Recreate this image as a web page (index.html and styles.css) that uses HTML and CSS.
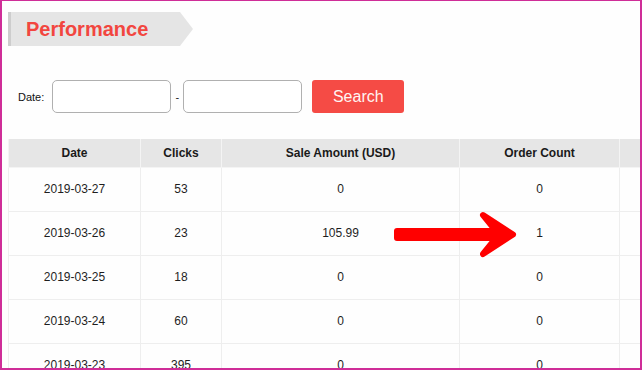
FILE: index.html
```html
<!DOCTYPE html>
<html>

<head>
	<meta charset="UTF-8">
	<meta name="viewport" content="width=device-width, initial-scale=1.0">
	<title>Performance</title>
	<link rel="stylesheet" href="styles.css">
</head>

<body>
	<div class="frame">
		<div class="panel">
			<div class="title-tab">Performance</div>

			<div class="filter">
				<label class="filter-label">Date:</label>
				<input type="text" class="date-input">
				<span class="dash">-</span>
				<input type="text" class="date-input">
				<button class="btn-search">Search</button>
			</div>

			<table class="report">
				<colgroup>
					<col class="c-date">
					<col class="c-clicks">
					<col class="c-amount">
					<col class="c-orders">
					<col class="c-extra">
				</colgroup>
				<thead>
					<tr>
						<th>Date</th>
						<th>Clicks</th>
						<th>Sale Amount (USD)</th>
						<th>Order Count</th>
						<th></th>
					</tr>
				</thead>
				<tbody>
					<tr><td>2019-03-27</td><td>53</td><td>0</td><td>0</td><td></td></tr>
					<tr><td>2019-03-26</td><td>23</td><td>105.99</td><td>1</td><td></td></tr>
					<tr><td>2019-03-25</td><td>18</td><td>0</td><td>0</td><td></td></tr>
					<tr><td>2019-03-24</td><td>60</td><td>0</td><td>0</td><td></td></tr>
					<tr><td>2019-03-23</td><td>395</td><td>0</td><td>0</td><td></td></tr>
				</tbody>
			</table>
		</div>

		<!-- callout pointing at the order -->
		<svg class="callout" width="130" height="56" viewBox="0 0 130 56">
			<path d="M5 24 H104 L91 8 L121 27.5 L91 47 L104 31 H5 Z" fill="#ff0000" stroke="#ff0000" stroke-width="6" stroke-linejoin="round" />
		</svg>
	</div>
</body>

</html>
```

FILE: styles.css
```css
* {
	margin: 0px;
	padding: 0px;
	box-sizing: border-box;
}

body {
	background-color: #ffffff;
	font-family: "Liberation Sans", Arial, sans-serif;
	color: #222222;
}

.frame {
	position: relative;
	width: 642px;
	height: 370px;
	overflow: hidden;
	border-top: 1px solid #cf2d98;
	border-left: 2px solid #cf2d98;
	border-right: 2px solid #cf2d98;
	border-bottom: 2px solid #cf2d98;
	background-color: #fefefe;
}

.panel {
	padding-left: 6px;
	padding-top: 11px;
}

.title-tab {
	width: 185px;
	height: 34px;
	line-height: 34px;
	padding-left: 15px;
	border-left: 3px solid #cdcdcd;
	background-color: #e5e5e5;
	clip-path: polygon(0 0, 172px 0, 100% 50%, 172px 100%, 0 100%);
	color: #f2463f;
	font-size: 20px;
	font-weight: bold;
}

.filter {
	display: flex;
	align-items: center;
	margin-top: 34px;
	padding-left: 10px;
	height: 33px;
}

.filter-label {
	font-size: 11px;
	color: #111111;
	margin-right: 8px;
}

.date-input {
	width: 119px;
	height: 33px;
	border: 1px solid #b0b0b0;
	border-radius: 5px;
	background-color: #ffffff;
}

.dash {
	width: 12px;
	text-align: center;
	font-size: 11px;
}

.btn-search {
	width: 92px;
	height: 33px;
	margin-left: 10px;
	border: none;
	border-radius: 3px;
	background-color: #f54b45;
	color: #fff4f2;
	font-family: "Liberation Sans", Arial, sans-serif;
	font-size: 16px;
	cursor: pointer;
}

.report {
	margin-top: 26px;
	width: 772px;
	table-layout: fixed;
	border-collapse: collapse;
	font-size: 12px;
}

.c-date { width: 132px; }
.c-clicks { width: 81px; }
.c-amount { width: 238px; }
.c-orders { width: 160px; }
.c-extra { width: 161px; }

.report th {
	height: 28px;
	background-color: #e6e6e6;
	border: 1px solid #f4f4f4;
	border-top: none;
	font-weight: bold;
	color: #1a1a1a;
	text-align: center;
}

.report td {
	height: 44px;
	border: 1px solid #eeeeee;
	text-align: center;
	color: #1e1e1e;
}

.callout {
	position: absolute;
	left: 390px;
	top: 206px;
}
```
